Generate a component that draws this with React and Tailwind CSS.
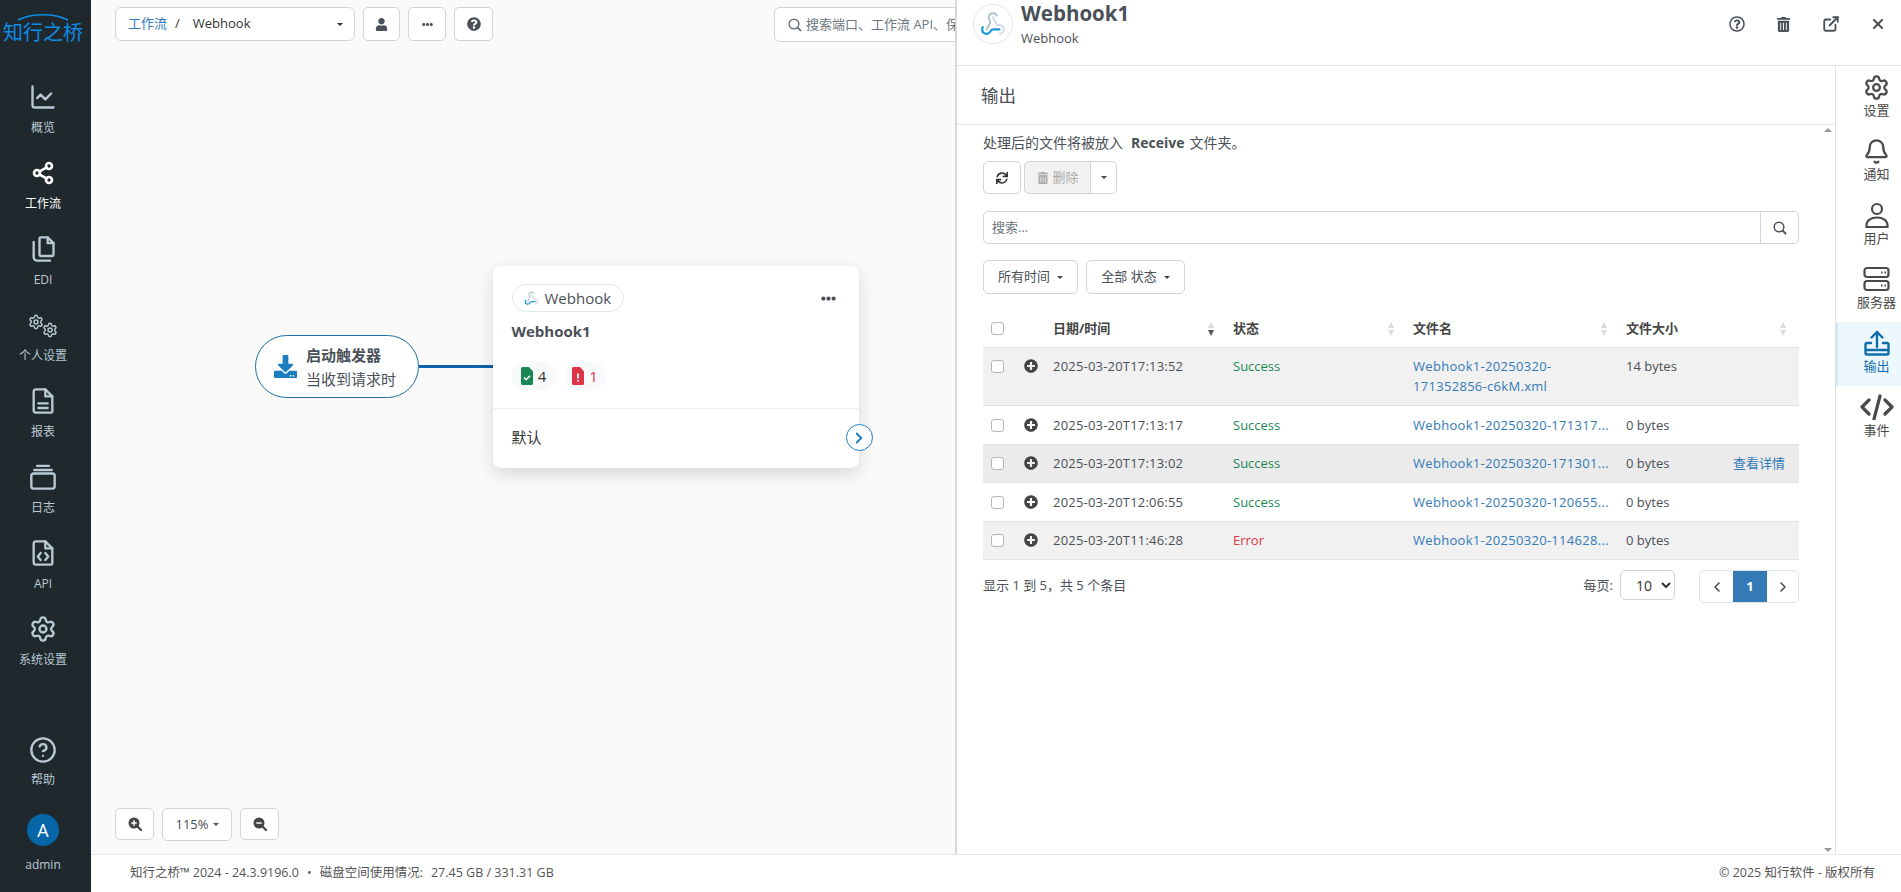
import React from 'react'
import { FaDownload, FaEllipsisH, FaPlusCircle, FaQuestionCircle, FaRegQuestionCircle, FaSync, FaTrashAlt, FaUser } from 'react-icons/fa'
import { Bell, ChartLine, ChevronLeft, ChevronRight, CircleHelp, ExternalLink, Settings, Share2, X } from 'lucide-react'

const Caret = ({ className = 'border-t-[#444]' }) => (
  <span className={`inline-block h-0 w-0 border-x-[3.5px] border-t-[3.5px] border-x-transparent ${className}`} />
)

const SortIcon = ({ active }) => (
  <span className="flex flex-col items-center gap-[2px]">
    <span className="h-0 w-0 border-x-[3.5px] border-b-[6px] border-x-transparent border-b-[#d8dce0]" />
    <span className={`h-0 w-0 border-x-[3.5px] border-t-[6px] border-x-transparent ${active ? 'border-t-[#555]' : 'border-t-[#d8dce0]'}`} />
  </span>
)

const WebhookIcon = ({ size }) => (
  <svg width={size} height={size} viewBox="0 0 24 24" fill="none" strokeWidth="2" strokeLinecap="round" strokeLinejoin="round">
    <path stroke="#b8c4cc" d="m6 17 3.13-5.78c.53-.97.1-2.18-.5-3.1a4 4 0 1 1 6.89-4.06" />
    <path stroke="#d5dce2" d="m12 6 3.13 5.73C15.66 12.7 16.9 13 18 13a4 4 0 0 1 0 8" />
    <path stroke="#1b9ad6" d="M18 16.98h-5.99c-1.1 0-1.95.94-2.48 1.9A4 4 0 0 1 2 17c.01-.7.2-1.4.57-2" />
  </svg>
)

const svgProps = { width: 28, height: 28, viewBox: '0 0 24 24', fill: 'none', stroke: 'currentColor', strokeWidth: 2, strokeLinecap: 'round', strokeLinejoin: 'round' }

const CopyIcon = () => (
  <svg {...svgProps}>
    <path d="M10 2h6l5 5v10a1 1 0 0 1-1 1h-10a1 1 0 0 1-1-1V3a1 1 0 0 1 1-1z" />
    <path d="M16 2v5h5" />
    <path d="M4 6v13a3 3 0 0 0 3 3h11" />
  </svg>
)

const ReportIcon = () => (
  <svg {...svgProps}>
    <path d="M6 2h8l6 6v13a1 1 0 0 1-1 1H6a2 2 0 0 1-2-2V4a2 2 0 0 1 2-2z" />
    <path d="M14 2v6h6" />
    <path d="M8 14h8M8 18h8" />
  </svg>
)

const StackIcon = () => (
  <svg {...svgProps}>
    <path d="M7 2.5h10M4.500 6h15" />
    <rect x="2" y="9" width="20" height="13" rx="2" />
  </svg>
)

const ApiIcon = () => (
  <svg {...svgProps}>
    <path d="M6 2h8l6 6v13a1 1 0 0 1-1 1H6a2 2 0 0 1-2-2V4a2 2 0 0 1 2-2z" />
    <path d="M14 2v6h6" />
    <path d="m10 12-2.5 3 2.500 3M14 12l2.500 3-2.500 3" />
  </svg>
)

const CogsIcon = () => (
  <span className="relative block h-7 w-7">
    <Settings size={16} strokeWidth={2.2} className="absolute -left-[1px] top-[3px]" />
    <Settings size={16} strokeWidth={2.2} className="absolute left-[13px] top-[11px]" />
  </span>
)

const FileBadge = ({ color, kind }) => (
  <svg width="12" height="18" viewBox="0 0 12 18">
    <path fill={color} d="M1.500 0H8l4 4.500V16.500a1.500 1.500 0 0 1-1.500 1.500h-9A1.500 1.500 0 0 1 0 16.500v-15A1.500 1.500 0 0 1 1.500 0z" />
    {kind === 'ok' ? (
      <path d="M3 10.500l2.200 2.200L9 8.800" stroke="#fff" strokeWidth="1.600" fill="none" />
    ) : (
      <path d="M6 6.500v5M6 13v1.600" stroke="#fff" strokeWidth="1.800" fill="none" />
    )}
  </svg>
)

const UserRail = () => (
  <svg width="26" height="26" viewBox="0 0 26 26" fill="none" stroke="currentColor" strokeWidth="2.200">
    <circle cx="13" cy="7" r="5" />
    <path d="M2.500 25v-1.500C2.500 18.500 7 15.500 13 15.500s10.500 3 10.500 8V25z" />
  </svg>
)

const ServerRail = () => (
  <svg width="27" height="26" viewBox="0 0 27 26" fill="none" stroke="currentColor" strokeWidth="2.200">
    <rect x="1.500" y="2" width="24" height="9" rx="2.500" />
    <rect x="1.500" y="15" width="24" height="9" rx="2.500" />
    <path d="M18 6.500h1.500M21.500 6.500H23M18 19.500h1.500M21.500 19.500H23" />
  </svg>
)

const OutputRail = () => (
  <svg width="26" height="26" viewBox="0 0 26 26" fill="none" stroke="currentColor" strokeWidth="2.400" strokeLinecap="round" strokeLinejoin="round">
    <path d="M13 17V2M7.500 7.500 13 2l5.500 5.500" />
    <path d="M7 13H3a1.500 1.500 0 0 0-1.500 1.500V23A1.500 1.500 0 0 0 3 24.500h20a1.500 1.500 0 0 0 1.500-1.500v-8.500A1.500 1.500 0 0 0 23 13h-4M1.500 20h23" />
  </svg>
)

const CodeRail = () => (
  <svg width="34" height="26" viewBox="0 0 34 26" fill="none" stroke="currentColor" strokeWidth="3.200" strokeLinecap="round" strokeLinejoin="round">
    <path d="M9 6l-7 7 7 7M25 6l7 7-7 7M20 2l-6 23" />
  </svg>
)

const SearchOutline = ({ color = '#6c757d', size = 14 }) => (
  <svg width={size} height={size} viewBox="0 0 14 14" fill="none" stroke={color} strokeWidth="1.500">
    <circle cx="6" cy="6" r="4.800" />
    <path d="M9.500 9.500 13 13" strokeWidth="1.800" />
  </svg>
)

const ZoomIcon = ({ plus }) => (
  <svg width="14" height="14" viewBox="0 0 14 14">
    <circle cx="6" cy="6" r="5.500" fill="#444" />
    <path d="M9.800 9.800 13 13" stroke="#444" strokeWidth="2.200" strokeLinecap="round" />
    <path d={plus ? 'M3.300 6h5.400M6 3.300v5.400' : 'M3.300 6h5.400'} stroke="#fff" strokeWidth="1.500" />
  </svg>
)

const navItems = [
  { label: '概览', icon: <ChartLine size={28} strokeWidth={2} /> },
  { label: '工作流', icon: <Share2 size={24} strokeWidth={2.6} />, active: true },
  { label: 'EDI', icon: <CopyIcon /> },
  { label: '个人设置', icon: <CogsIcon /> },
  { label: '报表', icon: <ReportIcon /> },
  { label: '日志', icon: <StackIcon /> },
  { label: 'API', icon: <ApiIcon /> },
  { label: '系统设置', icon: <Settings size={28} strokeWidth={2} /> },
]

const railItems = [
  { label: '设置', icon: <Settings size={27} strokeWidth={2} /> },
  { label: '通知', icon: <Bell size={27} strokeWidth={2} /> },
  { label: '用户', icon: <UserRail /> },
  { label: '服务器', icon: <ServerRail /> },
  { label: '输出', icon: <OutputRail />, active: true },
  { label: '事件', icon: <CodeRail /> },
]

const rows = [
  { date: '2025-03-20T17:13:52', status: 'Success', file: 'Webhook1-20250320-171352856-c6kM.xml', size: '14 bytes', bg: 'bg-[#f1f1f1]', wrap: true },
  { date: '2025-03-20T17:13:17', status: 'Success', file: 'Webhook1-20250320-171317...', size: '0 bytes', bg: 'bg-white' },
  { date: '2025-03-20T17:13:02', status: 'Success', file: 'Webhook1-20250320-171301...', size: '0 bytes', bg: 'bg-[#ebebeb]', action: true },
  { date: '2025-03-20T12:06:55', status: 'Success', file: 'Webhook1-20250320-120655...', size: '0 bytes', bg: 'bg-white' },
  { date: '2025-03-20T11:46:28', status: 'Error', file: 'Webhook1-20250320-114628...', size: '0 bytes', bg: 'bg-[#f1f1f1]' },
]

const Checkbox = () => <span className="block h-[13px] w-[13px] rounded-[3px] border border-[#b5b5b5] bg-white" />

const toolBtn = 'flex shrink-0 items-center justify-center rounded-[5px] border border-[#ced4da] bg-white text-[#495057]'

const Sidebar = () => (
  <aside className="flex h-full w-[91px] shrink-0 flex-col items-center bg-[#1f282c] pr-[5px] text-[#b9cad6]">
    {/* Logo */}
    <div className="flex h-[61px] w-full flex-col items-center pt-[13px]">
      <svg width="52" height="8" viewBox="0 0 52 8" fill="none">
        <path d="M1 7C15 0 37 0 51 7" stroke="#0b8de8" strokeWidth="1.600" />
      </svg>
      <div className="mt-[2px] whitespace-nowrap text-[20px] leading-[20px] text-[#0b8de8]">知行之桥</div>
    </div>

    {navItems.map((item) => (
      <div key={item.label} className={`flex h-[76px] w-full flex-col items-center pt-[22px] ${item.active ? 'text-white' : ''}`}>
        <div className="flex h-7 items-center justify-center">{item.icon}</div>
        <div className="mt-[9px] text-[12px] leading-4">{item.label}</div>
      </div>
    ))}

    {/* Bottom */}
    <div className="mt-auto flex w-full flex-col items-center pb-[19px]">
      <CircleHelp size={28} strokeWidth={2} />
      <div className="mt-[8px] text-[12px] leading-4">帮助</div>
      <div className="mt-[26px] flex h-8 w-8 items-center justify-center rounded-full bg-[#0667a8] text-[18px] text-white">A</div>
      <div className="mt-[11px] text-[12px] leading-4">admin</div>
    </div>
  </aside>
)

const Canvas = () => (
  <div className="relative min-w-0 flex-1 overflow-hidden bg-[#fafafa]">
    {/* Toolbar */}
    <div className="flex items-start whitespace-nowrap pl-[24px] pt-[7px]">
      <div className="flex h-[34px] w-[240px] shrink-0 items-center rounded-[6px] border border-[#ced4da] bg-white pl-[12px] pr-[11px]">
        <span className="text-[#337ab7]">工作流</span>
        <span className="ml-[8px] text-[#333]">/</span>
        <span className="ml-[13px] text-[#333]">Webhook</span>
        <Caret className="ml-auto border-t-[#333]" />
      </div>
      <div className={`${toolBtn} ml-[8px] h-[34px] w-[37px]`}><FaUser size={13} /></div>
      <div className={`${toolBtn} ml-[8px] h-[34px] w-[38px]`}><FaEllipsisH size={11} /></div>
      <div className={`${toolBtn} ml-[8px] h-[34px] w-[39px]`}><FaQuestionCircle size={14} /></div>
      <div className="ml-[281px] flex h-[35px] w-[330px] shrink-0 items-center rounded-[6px] border border-[#ced4da] bg-white pl-[13px] text-[#6c757d]">
        <SearchOutline />
        <span className="ml-[4px]">搜索端口、工作流 API、保存的文件</span>
      </div>
    </div>

    {/* Trigger node */}
    <div className="absolute left-[164px] top-[335px] flex h-[63px] w-[164px] items-center rounded-full border-[1.5px] border-[#1a6fa8] bg-white pl-[18px]">
      <FaDownload size={23} className="text-[#1a7fc1]" />
      <div className="ml-[9px] text-[15px] leading-[24px] text-[#495057]">
        <div className="font-bold">启动触发器</div>
        <div>当收到请求时</div>
      </div>
    </div>
    <div className="absolute left-[328px] top-[365px] h-[3px] w-[74px] bg-[#0f62ac]" />

    {/* Webhook node */}
    <div className="absolute left-[402px] top-[266px] w-[366px] rounded-[8px] bg-white pt-[18px] shadow-[0_6px_18px_rgba(0,0,0,0.14)]">
      <div className="flex items-center justify-between pl-[18.5px] pr-[23px]">
        <div className="flex h-[28px] w-[112px] items-center gap-[6px] rounded-full border border-[#e3e6ea] bg-white pl-[11px] text-[15px] text-[#495057]">
          <WebhookIcon size={15} />
          <span>Webhook</span>
        </div>
        <FaEllipsisH size={15} className="text-[#495057]" />
      </div>
      <div className="mt-[9px] pl-[18.5px] text-[15px] font-bold leading-[20px] text-[#495057]">Webhook1</div>
      <div className="mt-[21px] flex gap-[9px] pl-[18.5px]">
        <div className="flex h-[28px] w-[44px] items-center justify-center gap-[5px] rounded-full bg-[#f7f9fb] text-[15px] text-[#333]">
          <FileBadge color="#198754" kind="ok" />4
        </div>
        <div className="flex h-[28px] w-[41px] items-center justify-center gap-[5px] rounded-full bg-[#f7f9fb] text-[15px] text-[#dc3545]">
          <FileBadge color="#dc3545" kind="err" />1
        </div>
      </div>
      <div className="mt-[18px] flex h-[60px] items-center border-t border-[#eceef0] pb-[2px] pl-[18.5px] text-[15px] text-[#333]">默认</div>
      <div className="absolute -right-[13.5px] top-[158px] flex h-[27px] w-[27px] items-center justify-center rounded-full border-[1.5px] border-[#1f7fbf] bg-white text-[#1f7fbf]">
        <ChevronRight size={18} strokeWidth={2.5} />
      </div>
    </div>

    {/* Zoom controls */}
    <div className="absolute bottom-[13px] left-[24px] flex items-start gap-[8px]">
      <div className={`${toolBtn} h-[32px] w-[39px]`}><ZoomIcon plus /></div>
      <div className={`${toolBtn} h-[33px] w-[70px] gap-[4px]`}>115%<Caret className="border-t-[#555]" /></div>
      <div className={`${toolBtn} h-[32px] w-[39px]`}><ZoomIcon /></div>
    </div>
  </div>
)

const OutputTable = () => (
  <table className="w-[816px] table-fixed border-collapse text-[#495057]">
    <colgroup>
      <col className="w-[33px]" />
      <col className="w-[29px]" />
      <col className="w-[180px]" />
      <col className="w-[180px]" />
      <col className="w-[213px]" />
      <col className="w-[107px]" />
      <col className="w-[74px]" />
    </colgroup>
    <thead>
      <tr className="h-[33px] border-b border-[#dee2e6]">
        <th className="pb-[3px] pl-2 align-middle"><Checkbox /></th>
        <th />
        {['日期/时间', '状态', '文件名'].map((name, i) => (
          <th key={name} className="px-2 pb-[3px] text-left font-bold text-[#444]">
            <div className="flex items-center justify-between pr-[3px]">
              {name}
              <SortIcon active={i === 0} />
            </div>
          </th>
        ))}
        <th colSpan={2} className="px-2 pb-[3px] text-left font-bold text-[#444]">
          <div className="flex items-center justify-between pr-[5px]">
            文件大小
            <SortIcon />
          </div>
        </th>
      </tr>
    </thead>
    <tbody>
      {rows.map((row) => (
        <tr key={row.date} className={`border-b border-[#dee2e6] align-top leading-5 ${row.bg}`}>
          <td className="py-[8.75px] pl-2"><div className="pt-[4px]"><Checkbox /></div></td>
          <td className="py-[8.75px] pl-2"><FaPlusCircle size={14} className="mt-[3px] text-[#444]" /></td>
          <td className="px-2 py-[8.75px] tracking-[0.2px]">{row.date}</td>
          <td className={`px-2 py-[8.75px] ${row.status === 'Error' ? 'text-[#dc3545]' : 'text-[#198754]'}`}>{row.status}</td>
          <td className={`px-2 py-[8.75px] tracking-[0.3px] text-[#337ab7] ${row.wrap ? '' : 'whitespace-nowrap'}`}>{row.file}</td>
          <td className="px-2 py-[8.75px]">{row.size}</td>
          <td className="py-[8.75px] pr-[14px] text-right text-[#337ab7]">{row.action ? '查看详情' : ''}</td>
        </tr>
      ))}
    </tbody>
  </table>
)

const Panel = () => (
  <section className="flex h-full w-[946px] shrink-0 flex-col border-l-2 border-[#d8d8d8] bg-white">
    {/* Header */}
    <header className="flex h-[66px] shrink-0 items-start border-b border-[#dfe3e8] pl-[16px]">
      <div className="mt-[4px] flex h-[40px] w-[40px] items-center justify-center rounded-full border border-[#e3e6ea]">
        <WebhookIcon size={26} />
      </div>
      <div className="ml-[8px]">
        <div className="text-[20.5px] font-bold leading-[26px] text-[#495057]">Webhook1</div>
        <div className="mt-[2px] leading-5 text-[#495057]">Webhook</div>
      </div>
      <div className="ml-auto flex h-[48px] text-[#495057]">
        <div className="flex w-[47px] items-center justify-center"><FaRegQuestionCircle size={16} /></div>
        <div className="flex w-[47px] items-center justify-center"><FaTrashAlt size={15} /></div>
        <div className="flex w-[47px] items-center justify-center"><ExternalLink size={18} strokeWidth={2.4} /></div>
        <div className="flex w-[47px] items-center justify-center"><X size={16} strokeWidth={3} /></div>
      </div>
    </header>

    <div className="flex min-h-0 flex-1">
      <div className="relative min-w-0 flex-1">
        {/* Scrollbar arrows */}
        <span className="absolute right-[3px] top-[62px] h-0 w-0 border-x-[4px] border-b-[4px] border-x-transparent border-b-[#999]" />
        <span className="absolute bottom-[2px] right-[3px] h-0 w-0 border-x-[4px] border-t-[4px] border-x-transparent border-t-[#999]" />

        <div className="flex h-[59px] items-center border-b border-[#dfe3e8] pl-[24px] text-[17.5px] text-[#495057]">输出</div>
        <div className="w-[842px] pl-[26px] text-[#495057]">
          <div className="pt-[8px] text-[14px] leading-5">
            处理后的文件将被放入<span className="ml-[8px] mr-[5px] font-bold">Receive</span>文件夹。
          </div>

          {/* Actions */}
          <div className="mt-[8px] flex">
            <div className={`${toolBtn} h-[33px] w-[38px]`}><FaSync size={12} className="text-[#333]" /></div>
            <div className="ml-[3px] flex h-[33px] items-center justify-center gap-[4px] rounded-l-[5px] border border-[#ced4da] bg-[#f2f2f2] px-[11.5px] text-[#aaa]">
              <FaTrashAlt size={12} />删除
            </div>
            <div className="flex h-[33px] w-[26px] items-center justify-center rounded-r-[5px] border border-l-0 border-[#ced4da] bg-white">
              <Caret className="border-t-[#444]" />
            </div>
          </div>

          {/* Search */}
          <div className="mt-[17px] flex h-[33px] w-[816px] rounded-[5px] border border-[#ced4da]">
            <div className="flex flex-1 items-center pl-[8px] text-[#6c757d]">搜索...</div>
            <div className="flex w-[38px] items-center justify-center border-l border-[#ced4da]"><SearchOutline color="#495057" /></div>
          </div>

          {/* Filters */}
          <div className="mt-[16px] flex gap-[8px]">
            <div className={`${toolBtn} h-[34px] w-[95px] gap-[7px]`}>所有时间<Caret /></div>
            <div className={`${toolBtn} h-[34px] w-[99px] gap-[7px]`}>全部 状态<Caret /></div>
          </div>

          <div className="mt-[20px]"><OutputTable /></div>

          {/* Pagination */}
          <div className="mt-[10px] flex w-[816px] items-start">
            <div className="leading-[30px]">显示 1 到 5，共 5 个条目</div>
            <div className="ml-auto leading-[30px]">每页:</div>
            <select defaultValue="10" className="ml-[7px] h-[30px] w-[55px] rounded-[5px] border border-[#ced4da] bg-white pl-[11px] text-[14px] text-[#333]">
              <option value="10">10</option>
            </select>
            <div className="ml-[24px] flex h-[33px] w-[100px] overflow-hidden rounded-[5px] border border-[#dee2e6]">
              <div className="flex w-[33px] items-center justify-center text-[#495057]"><ChevronLeft size={16} strokeWidth={2.4} /></div>
              <div className="flex w-[34px] items-center justify-center bg-[#337ab7] font-bold text-white">1</div>
              <div className="flex flex-1 items-center justify-center text-[#495057]"><ChevronRight size={16} strokeWidth={2.4} /></div>
            </div>
          </div>
        </div>
      </div>

      {/* Right rail */}
      <nav className="w-[66px] shrink-0 border-l border-[#dfe3e8]">
        {railItems.map((item) => (
          <div
            key={item.label}
            className={`flex h-[64px] flex-col items-center pt-[8px] ${item.active ? 'border-l-2 border-[#d7e6f3] bg-[#edf7fe] pl-[14px] text-[#0d6ea8]' : 'pl-[16px] text-[#4a4a4a]'}`}
          >
            <div className="flex h-[26px] items-center justify-center">{item.icon}</div>
            <div className="mt-[3px] whitespace-nowrap leading-[14px]">{item.label}</div>
          </div>
        ))}
      </nav>
    </div>
  </section>
)

export default function App() {
  return (
    <div className="flex h-[892px] w-[1901px] overflow-hidden bg-white font-['Open_Sans','Noto_Sans_CJK_SC',sans-serif] text-[13px]">
      <Sidebar />
      <div className="flex min-w-0 flex-1 flex-col">
        <div className="flex min-h-0 flex-1">
          <Canvas />
          <Panel />
        </div>
        {/* Footer */}
        <footer className="flex h-[38px] shrink-0 items-center justify-between border-t border-[#e2e8ee] bg-white pl-[39px] pr-[26px] text-[12.5px] text-[#555]">
          <div className="flex items-center">
            知行之桥™ 2024 - 24.3.9196.0
            <span className="mx-[8px]">•</span>
            磁盘空间使用情况:
            <span className="ml-[8px]">27.45 GB / 331.31 GB</span>
          </div>
          <div>© 2025 知行软件 - 版权所有</div>
        </footer>
      </div>
    </div>
  )
}
